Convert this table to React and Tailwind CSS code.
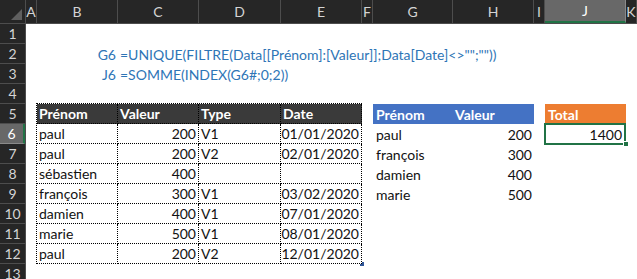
import React from 'react';

const font = { fontFamily: '"Lato", "Liberation Sans", sans-serif' };

// sheet column letters with their pixel widths
const COLS = [
  ['A', 'w-[11px]'],
  ['B', 'w-[81px]'],
  ['C', 'w-[81px]'],
  ['D', 'w-[82px]'],
  ['E', 'w-[81px]'],
  ['F', 'w-[11px]'],
  ['G', 'w-[80px]'],
  ['H', 'w-[81px]'],
  ['I', 'w-[11px]'],
  ['J', 'w-[81px]'],
  ['K', 'w-[11px]'],
  ['L', 'w-[81px]'],
];

const DATA = [
  ['paul', '200', 'V1', '01/01/2020'],
  ['paul', '200', 'V2', '02/01/2020'],
  ['sébastien', '400', '', ''],
  ['françois', '300', 'V1', '03/02/2020'],
  ['damien', '400', 'V1', '07/01/2020'],
  ['marie', '500', 'V1', '08/01/2020'],
  ['paul', '200', 'V2', '12/01/2020'],
];

const UNIQUES = [
  ['paul', '200', 'row-start-6'],
  ['françois', '300', 'row-start-7'],
  ['damien', '400', 'row-start-8'],
  ['marie', '500', 'row-start-9'],
];

const ColumnHeaders = () => (
  <div className="flex h-[24px] bg-[#262626] border-b border-[#4d4d4d]">
    <div className="w-[26px] h-full border-r border-[#4d4d4d] relative shrink-0">
      <div className="absolute right-[3px] bottom-[3px] w-0 h-0 border-l-[11px] border-l-transparent border-b-[11px] border-b-[#5f5f5f]" />
    </div>
    {COLS.map(([c, w]) =>
      c === 'J' ? (
        <div key={c} className={`${w} shrink-0 h-full bg-[#686868] border-r border-[#8a8a8a] border-b-2 border-b-[#217346] flex items-center justify-center text-[14px] text-white`}>
          {c}
        </div>
      ) : (
        <div key={c} className={`${w} shrink-0 h-full border-r border-[#4d4d4d] flex items-center justify-center text-[14px] text-[#d4d4d4]`}>
          {c}
        </div>
      )
    )}
  </div>
);

const RowHeaders = () => (
  <div className="w-[26px] shrink-0 bg-[#262626] border-r border-[#4d4d4d] flex flex-col">
    {Array.from({ length: 13 }, (_, i) => i + 1).map((n) =>
      n === 6 ? (
        <div key={n} className="h-[20px] shrink-0 bg-[#686868] border-b border-[#8a8a8a] border-r-2 border-r-[#217346] flex items-center justify-center text-[14px] text-white">
          {n}
        </div>
      ) : (
        <div key={n} className="h-[20px] shrink-0 border-b border-[#4d4d4d] flex items-center justify-center text-[14px] text-[#d4d4d4]">
          {n}
        </div>
      )
    )}
  </div>
);

const dot = 'border-black border-dotted';

const DataTable = () => (
  <div className={`col-start-2 col-span-4 row-start-5 row-span-8 grid grid-cols-[81px_81px_82px_81px] grid-rows-[repeat(8,20px)] border-l border-t ${dot} -mt-px -ml-px relative`}>
    {['Prénom', 'Valeur', 'Type', 'Date'].map((h) => (
      <div key={h} className={`bg-[#3a3a3a] text-white font-bold text-[14px] px-[2px] flex items-center border-r border-b ${dot}`}>
        {h}
      </div>
    ))}
    {DATA.map((r, i) => (
      <React.Fragment key={i}>
        <div className={`text-[14px] px-[2px] flex items-center border-r border-b ${dot}`}>{r[0]}</div>
        <div className={`text-[14px] px-[2px] flex items-center justify-end border-r border-b ${dot}`}>{r[1]}</div>
        <div className={`text-[14px] px-[2px] flex items-center border-r border-b ${dot}`}>{r[2]}</div>
        <div className={`text-[14px] px-[2px] flex items-center justify-end border-r border-b ${dot}`}>{r[3]}</div>
      </React.Fragment>
    ))}
    <div className="absolute -right-[2px] -bottom-[2px] w-[4px] h-[4px] border-r-2 border-b-2 border-[#2f5597]" />
  </div>
);

export default function App() {
  return (
    <div className="w-[637px] h-[279px] overflow-hidden bg-white text-[#111]" style={font}>
      <ColumnHeaders />
      <div className="flex">
        <RowHeaders />
        <div className="grid grid-cols-[11px_81px_81px_82px_81px_11px_80px_81px_11px_81px_40px] grid-rows-[repeat(13,20px)] text-[14px]">
          {/* formula notes */}
          <div className="col-start-2 row-start-2 pr-[2px] text-[#2e75b6] flex items-center justify-end">G6</div>
          <div className="col-start-3 col-span-7 row-start-2 pl-[2px] text-[#2e75b6] whitespace-nowrap flex items-center">
            =UNIQUE(FILTRE(Data[[Prénom]:[Valeur]];Data[Date]&lt;&gt;"";""))
          </div>
          <div className="col-start-2 row-start-3 pr-[2px] text-[#2e75b6] flex items-center justify-end">J6</div>
          <div className="col-start-3 col-span-3 row-start-3 pl-[2px] text-[#2e75b6] whitespace-nowrap flex items-center">
            =SOMME(INDEX(G6#;0;2))
          </div>

          <DataTable />

          {/* spilled unique list */}
          <div className="col-start-7 row-start-5 bg-[#4472c4] text-white font-bold px-[3px] flex items-center">Prénom</div>
          <div className="col-start-8 row-start-5 bg-[#4472c4] text-white font-bold px-[2px] flex items-center">Valeur</div>
          {UNIQUES.map(([n, v, row]) => (
            <React.Fragment key={n}>
              <div className={`col-start-7 ${row} px-[3px] flex items-center`}>{n}</div>
              <div className={`col-start-8 ${row} px-[2px] flex items-center justify-end`}>{v}</div>
            </React.Fragment>
          ))}

          {/* total */}
          <div className="col-start-10 row-start-5 bg-[#ed7d31] text-white font-bold px-[3px] flex items-center">Total</div>
          <div className="col-start-10 row-start-6 relative flex items-center justify-end px-[2px]">
            <div className="absolute -inset-y-px -left-px right-0 border-2 border-[#217346]" />
            <div className="absolute -right-[3px] -bottom-[3px] w-[6px] h-[6px] bg-[#217346] border border-white" />
            <span className="relative pr-[2px]">1400</span>
          </div>
        </div>
      </div>
    </div>
  );
}
